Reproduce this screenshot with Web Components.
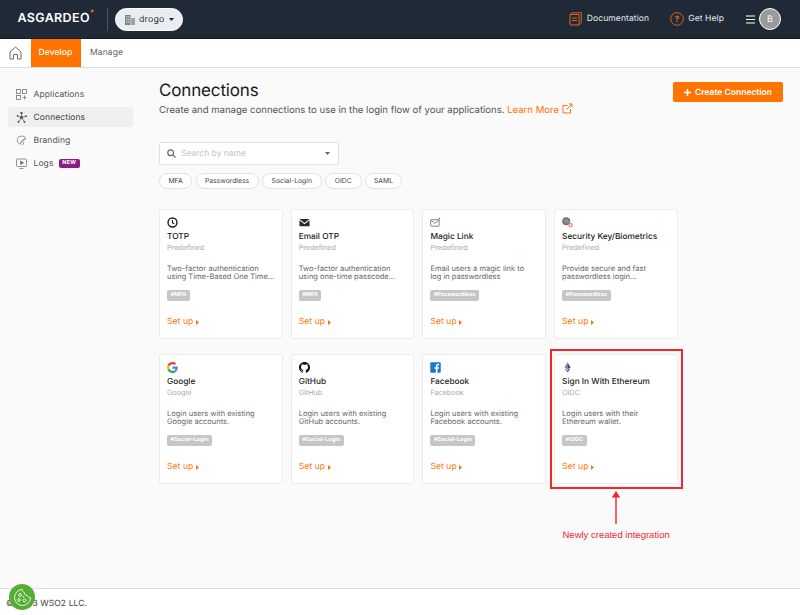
<!doctype html>
<html lang="en"><head><meta charset="utf-8"><title>Connections</title>
<style>
html,body{margin:0;padding:0;height:615px;overflow:hidden}
body{font-family:Inter,"Noto Sans",sans-serif;text-rendering:geometricPrecision;background:#fafafa;color:#333;display:flex;flex-direction:column;width:800px}
</style></head><body>
<app-header></app-header>
<app-tabs></app-tabs>
<main-area>
  <side-nav slot="nav"></side-nav>
  <page-head></page-head>
  <search-box></search-box>
  <filter-row></filter-row>
  <card-grid>
    <conn-card icon="clock" name="TOTP" kind="Predefined" l1="Two-factor authentication" l2="using Time-Based One Time..." tag="#MFA"></conn-card>
    <conn-card icon="mail" name="Email OTP" kind="Predefined" l1="Two-factor authentication" l2="using one-time passcode..." tag="#MFA"></conn-card>
    <conn-card icon="magic" name="Magic Link" kind="Predefined" l1="Email users a magic link to" l2="log in passwordless" tag="#Passwordless"></conn-card>
    <conn-card icon="finger" name="Security Key/Biometrics" kind="Predefined" l1="Provide secure and fast" l2="passwordless login..." tag="#Passwordless"></conn-card>
    <conn-card icon="google" name="Google" kind="Google" l1="Login users with existing" l2="Google accounts." tag="#Social-Login"></conn-card>
    <conn-card icon="github" name="GitHub" kind="GitHub" l1="Login users with existing" l2="GitHub accounts." tag="#Social-Login"></conn-card>
    <conn-card icon="facebook" name="Facebook" kind="Facebook" l1="Login users with existing" l2="Facebook accounts." tag="#Social-Login"></conn-card>
    <conn-card icon="eth" name="Sign In With Ethereum" kind="OIDC" l1="Login users with their" l2="Ethereum wallet." tag="#OIDC"></conn-card>
  </card-grid>
</main-area>
<page-footer></page-footer>
<red-note></red-note>
<script>
const FONT='font-family:Inter,"Noto Sans",sans-serif;';
function def(name,html,init){
  customElements.define(name,class extends HTMLElement{
    constructor(){super();const r=this.attachShadow({mode:'open'});r.innerHTML=typeof html==='function'?html(this):html;}
    connectedCallback(){if(init)init(this);}
  });
}
const ICONS={
 clock:`<svg width="11" height="11" viewBox="0 0 12 12"><circle cx="6" cy="6" r="4.900" fill="none" stroke="#1c1c1c" stroke-width="1.500"/><path d="M6 3.200V6.200L8 7.600" fill="none" stroke="#1c1c1c" stroke-width="1.200"/></svg>`,
 mail:`<svg width="11" height="11" viewBox="0 0 12 12"><path d="M.5 2.200h11L6 6.600z" fill="#2a2a2a"/><path d="M.5 3.600 6 8l5.500-4.400v6.600H.5z" fill="#2a2a2a"/></svg>`,
 magic:`<svg width="11" height="11" viewBox="0 0 12 12" fill="none" stroke="#555" stroke-width=".8"><rect x=".7" y="3" width="9.300" height="7" rx=".8"/><path d="M.9 3.400 5.300 7l4.500-3.600"/><path d="M10.200 .8v2M9.200 1.800h2" stroke="#777"/></svg>`,
 finger:`<svg width="11" height="11" viewBox="0 0 12 12"><circle cx="4.600" cy="4.600" r="4.300" fill="#6f7378"/><path d="M2.500 4.500a2.200 2.200 0 0 1 4.300 0v2M3.600 7V4.700a1 1 0 0 1 2 0v3" fill="none" stroke="#c9cbce" stroke-width=".5"/><rect x="7" y="6.600" width="4.600" height="4.600" rx="1.400" fill="#f58a7d"/><rect x="8.500" y="8" width="1.600" height="1.900" fill="#fff"/></svg>`,
 google:`<svg width="11" height="11" viewBox="0 0 48 48"><path fill="#EA4335" d="M24 9.500c3.500 0 6.700 1.200 9.200 3.600l6.900-6.900C35.900 2.400 30.500 0 24 0 14.600 0 6.500 5.400 2.600 13.200l8 6.200C12.400 13.700 17.700 9.500 24 9.500z"/><path fill="#4285F4" d="M47 24.500c0-1.600-.1-3.100-.4-4.500H24v9h12.900c-.6 3-2.200 5.500-4.700 7.200l7.700 6c4.500-4.200 7.100-10.300 7.100-17.700z"/><path fill="#FBBC05" d="M10.600 28.600A14.500 14.500 0 0 1 9.800 24c0-1.600.3-3.200.8-4.600l-8-6.200A24 24 0 0 0 0 24c0 3.900.9 7.500 2.600 10.800z"/><path fill="#34A853" d="M24 48c6.500 0 11.900-2.100 15.900-5.800l-7.700-6c-2.200 1.500-4.900 2.300-8.200 2.300-6.300 0-11.600-4.200-13.500-9.900l-8 6.200C6.500 42.600 14.600 48 24 48z"/></svg>`,
 github:`<svg width="11" height="11" viewBox="0 0 16 16"><path fill="#111" d="M8 0C3.580 0 0 3.580 0 8c0 3.540 2.290 6.530 5.470 7.590.4.070.55-.17.55-.38 0-.19-.01-.82-.01-1.490-2.010.37-2.530-.49-2.690-.94-.09-.23-.48-.94-.82-1.130-.28-.15-.68-.52-.01-.53.63-.01 1.080.58 1.230.82.720 1.210 1.870.87 2.330.66.070-.52.280-.87.510-1.070-1.780-.2-3.640-.89-3.640-3.950 0-.87.310-1.590.820-2.150-.08-.2-.36-1.020.08-2.120 0 0 .67-.21 2.200.82.640-.18 1.320-.27 2-.27s1.360.09 2 .27c1.530-1.040 2.200-.82 2.200-.82.440 1.100.160 1.920.080 2.120.510.560.820 1.270.820 2.150 0 3.070-1.870 3.750-3.650 3.950.290.250.540.730.540 1.480 0 1.070-.01 1.930-.01 2.200 0 .210.150.460.550.380A8 8 0 0 0 16 8c0-4.420-3.580-8-8-8z"/></svg>`,
 facebook:`<svg width="11" height="11" viewBox="0 0 12 12"><rect x=".3" y=".3" width="11.400" height="11.400" rx="1" fill="#1877d2"/><path fill="#fff" d="M8.200 12V7.400h1.500l.25-1.800H8.200V4.500c0-.5.150-.85.900-.85h.95V2.050C9.880 2.030 9.330 2 8.720 2 7.400 2 6.400 2.800 6.400 4.300v1.300H4.900v1.800h1.500V12z"/></svg>`,
 eth:`<svg width="11" height="11" viewBox="0 0 12 12"><path d="M6 .4 2.700 6 6 8z" fill="#7d83a8"/><path d="M6 .4 9.300 6 6 8z" fill="#3e4468"/><path d="M2.700 6.700 6 11.600V8.700z" fill="#7d83a8"/><path d="M9.300 6.700 6 11.600V8.700z" fill="#3e4468"/></svg>`
};
const caret=c=>`<svg width="5" height="3" viewBox="0 0 7 4"><path d="M0 0h7L3.500 4z" fill="${c}"/></svg>`;

def('app-header',`<style>
:host{display:flex;height:38px;border-bottom:1px solid #161c24;background:#202a36;align-items:center;color:#fff;${FONT}box-sizing:content-box}
.logo{margin-left:17.500px;font:600 12.500px/1 Inter,sans-serif;letter-spacing:.35px;position:relative;width:77px;white-space:nowrap;color:#fff}
.logo i{position:absolute;left:73px;top:-4px;color:#f47b20;font:700 8px/1 "Liberation Sans",sans-serif}
.div{width:1px;height:23px;background:#4a535e;margin-left:12.500px}
.org{margin-left:7px;width:68px;height:23px;box-sizing:border-box;border-radius:12px;background:#e9edf1;border:1px solid #fff;display:flex;align-items:center;color:#333;font-size:8.800px;font-weight:400;padding-left:8.500px}
.org svg:first-child{margin-right:4.500px}.org span{letter-spacing:.2px;width:30px}
.sp{flex:1}
.act{display:flex;align-items:center;font-size:8.500px;color:#e8eaec;letter-spacing:.1px}
.a1 svg{margin-right:5px}.a2{margin-left:21px}.a2 svg{margin-right:4px}
.menu{margin-left:22px;display:block}
.av{margin:0 19px 0 4px;width:22px;height:22px;box-sizing:border-box;border-radius:50%;background:#9a9a9a;border:1.500px solid #fff;display:flex;align-items:center;justify-content:center;font-size:9px;color:#fff}
</style>
<div class="logo">ASGARDEO<i>*</i></div><div class="div"></div>
<div class="org"><svg width="10" height="11" viewBox="0 0 10 11" fill="#7c8288"><path d="M0 1h5.500v10H0z"/><path d="M6.200 4H10v7H6.200z" fill="#9aa0a5"/><path d="M1.200 2.500h1.200v1.200H1.200zM3.200 2.500h1.200v1.200H3.200zM1.200 5h1.200v1.200H1.200zM3.200 5h1.200v1.200H3.200zM1.200 7.500h1.200v1.200H1.200zM3.200 7.500h1.200v1.200H3.200z" fill="#e9edf1"/></svg><span>drogo</span>${caret('#222')}</div>
<div class="sp"></div>
<div class="act a1"><svg width="13" height="14" viewBox="0 0 13 14" fill="none" stroke="#d9641e" stroke-width="1"><path d="M1 2.500h9v10.500H2a1 1 0 0 1-1-1z"/><path d="M1 2.500 3 .8h9.300v10L10 13M3 6h5M3 8.500h5"/></svg>Documentation</div>
<div class="act a2"><svg width="14" height="14" viewBox="0 0 14 14"><circle cx="7" cy="7" r="6.300" fill="none" stroke="#d9641e" stroke-width="1"/><text x="7" y="10" text-anchor="middle" font-size="8.500" font-weight="700" fill="#e0661c" font-family="Inter,sans-serif">?</text></svg>Get Help</div>
<svg class="menu" width="9" height="9" viewBox="0 0 9 9"><path d="M0 1h9M0 4.500h9M0 8h9" stroke="#fff" stroke-width="1.200"/></svg>
<div class="av">B</div>`);

def('app-tabs',`<style>
:host{display:flex;height:28px;background:#fff;border-bottom:1px solid #dcdcdc;align-items:stretch;font-size:8.500px;${FONT}letter-spacing:.1px}
.home{width:30.500px;display:flex;align-items:center;justify-content:center}
.dev{width:50px;background:#ff7300;color:#fff;display:flex;align-items:center;justify-content:center;font-weight:500}
.man{margin-left:9.500px;display:flex;align-items:center;color:#666}
</style>
<div class="home"><svg width="13" height="14" viewBox="0 0 13 14" fill="none" stroke="#6d6d6d" stroke-width="1"><path d="M1 6 6.500 1 12 6v7H8.500V8.500h-4V13H1z"/></svg></div>
<div class="dev">Develop</div><div class="man">Manage</div>`);

def('main-area',`<style>
:host{display:flex;flex:1;min-height:0;position:relative}
.side{width:159px;flex:none}
.c{flex:1;display:flex;flex-direction:column;padding-right:17px}
</style>
<div class="side"><slot name="nav"></slot></div><div class="c"><slot></slot></div>`);

def('side-nav',`<style>
:host{display:flex;flex-direction:column;gap:3px;padding:16px 0 0 8px;width:125px;font-size:8.500px;${FONT}color:#555;letter-spacing:.1px}
.i{height:20px;display:flex;align-items:center;padding:1px 0 0 8px;border-radius:2px;box-sizing:border-box}
.i svg{width:11px;height:11px;margin:-1px 6.500px 0 0;flex:none}
.on{background:#efefef;color:#444}
.new{margin-left:5.500px;background:#8c1a87;color:#fff;font-size:5.500px;font-weight:700;width:20.500px;text-align:center;height:9.500px;line-height:9.500px;border-radius:2px;letter-spacing:.2px}
</style>
<div class="i"><svg viewBox="0 0 11 11" fill="none" stroke="#777" stroke-width=".8"><rect x=".5" y=".5" width="4" height="4"/><rect x="6.500" y=".5" width="4" height="4"/><rect x=".5" y="6.500" width="4" height="4"/><path d="M8.500 6.500v4M6.500 8.500h4"/></svg>Applications</div>
<div class="i on"><svg viewBox="0 0 11 11" fill="none" stroke="#555" stroke-width=".7"><path d="M5.500 1v4.500M5.500 5.500 1.500 3.800M5.500 5.500 10 4.200M5.500 5.500 2.500 10M5.500 5.500 8.500 10"/><circle cx="5.500" cy="1" r=".9" fill="#555"/><circle cx="5.500" cy="5.500" r="1.200" fill="#555"/><circle cx="1.500" cy="3.800" r=".6" fill="#555"/><circle cx="10" cy="4.200" r=".6" fill="#555"/><circle cx="2.500" cy="10" r=".7" fill="#555"/><circle cx="8.500" cy="10" r=".7" fill="#555"/></svg>Connections</div>
<div class="i"><svg viewBox="0 0 11 11" fill="none" stroke="#777" stroke-width=".8"><path d="M2 2.500C4 .5 8 .8 9.500 2.500L5 7.500 4.500 9C2 9.500.5 5 2 2.500z"/><path d="M4.500 7 10 3.500M7 7c1 1 .5 2.500-1 3"/></svg>Branding</div>
<div class="i"><svg viewBox="0 0 11 11" fill="none" stroke="#777" stroke-width=".8"><rect x=".5" y="1" width="10" height="7.500" rx=".8"/><path d="M3.500 10.500h4"/><path d="M4.500 3 7.500 4.800 4.500 6.500z" fill="#777"/></svg>Logs<span class="new">NEW</span></div>`,
);

def('page-head',`<style>
:host{display:flex;align-items:flex-start;${FONT}padding-top:11px}
.l{flex:1}
h1{margin:0;font-size:17px;font-weight:400;color:#1c1c1c;line-height:24px;letter-spacing:-.15px}
p{margin:0;font-size:9.550px;color:#555;line-height:14px;letter-spacing:0;white-space:nowrap}
a{color:#ff7300;text-decoration:none}
svg{vertical-align:-1.500px}
button{all:unset;box-sizing:border-box;width:110px;height:20px;margin-top:3px;background:#ff7300;border-radius:2px;color:#fff;font-size:8.500px;font-weight:600;display:flex;align-items:center;justify-content:center;gap:4px;letter-spacing:0;padding-top:1px}
</style>
<div class="l"><h1>Connections</h1><p>Create and manage connections to use in the login flow of your applications. <a>Learn More <svg width="11" height="11" viewBox="0 0 11 11" fill="none" stroke="#ff7300" stroke-width="1"><path d="M8.500 6v4H1V2.500h4.500"/><path d="M4.500 6.500 10 1M7 1h3v3"/></svg></a></p></div>
<button><svg width="7" height="7" viewBox="0 0 7 7"><path d="M3.500 0v7M0 3.500h7" stroke="#fff" stroke-width="1.500"/></svg>Create Connection</button>`);

def('search-box',`<style>
:host{display:block;width:180px;height:23px;box-sizing:border-box;background:#fff;border:1px solid #e0e0e0;border-radius:2px;margin-top:24px;${FONT}font-size:8.500px;color:#c4c4c4;letter-spacing:0}
.w{display:flex;align-items:center;height:100%;padding:0 8px 0 7px}
.t{flex:1;margin:1px 0 0 5px}
</style><div class="w"><svg width="9" height="9" viewBox="0 0 9 9" fill="none" stroke="#666" stroke-width="1.200"><circle cx="3.700" cy="3.700" r="2.900"/><path d="m5.800 5.800 2.700 2.700"/></svg><span class="t">Search by name</span>${caret('#666')}</div>`);

def('filter-chip',`<style>
:host{display:flex;align-items:center;justify-content:center;height:16px;box-sizing:border-box;background:#fff;border:1px solid #e2e2e2;border-radius:8px;${FONT}font-size:6.800px;color:#444;letter-spacing:0}
</style><slot></slot>`);
def('filter-row',`<style>
:host{display:flex;gap:3.500px;margin-top:8px}
</style><filter-chip style="width:33px">MFA</filter-chip><filter-chip style="width:63px">Passwordless</filter-chip><filter-chip style="width:59.500px">Social-Login</filter-chip><filter-chip style="width:36.500px">OIDC</filter-chip><filter-chip style="width:37px">SAML</filter-chip>`);

def('card-grid',`<style>
:host{display:grid;grid-template-columns:repeat(4,123.500px);column-gap:8.200px;row-gap:15px;margin-top:20px}
</style><slot></slot>`);

def('conn-card',el=>{
 const a=n=>el.getAttribute(n);
 return `<style>
 :host{display:block;height:130px;box-sizing:border-box;background:#fff;border:1px solid #ececec;border-radius:2px;padding:7.500px 0 0 7px;${FONT}}
 .ic{height:11px;display:block}.ic svg{display:block}
 .n{margin-top:3.500px;font-size:8.300px;font-weight:500;color:#222;line-height:11px;letter-spacing:0;white-space:nowrap}
 .k{font-size:7.200px;color:#aaa;line-height:10px;margin-top:0;letter-spacing:0}
 .d{margin-top:12px;font-size:7.500px;line-height:8.700px;color:#666;letter-spacing:0;white-space:nowrap}
 .t{display:inline-block;margin-top:8px;background:#c6c6c6;color:#fff;font-size:5.600px;font-weight:700;line-height:11px;height:11px;padding:0 3.500px;border-radius:2px;letter-spacing:0;vertical-align:top}
 .s{margin-top:15.500px;font-size:8.500px;color:#ff7300;display:flex;align-items:center;gap:2.500px;letter-spacing:.1px;line-height:11px}
 </style>
 <div class="ic">${ICONS[a('icon')]}</div>
 <div class="n">${a('name')}</div><div class="k">${a('kind')}</div>
 <div class="d">${a('l1')}<br>${a('l2')}</div>
 <div><span class="t">${a('tag')}</span></div>
 <div class="s">Set up <svg width="3" height="5" viewBox="0 0 3 5"><path d="M0 0l3 2.500L0 5z" fill="#ff7300"/></svg></div>`;
});

def('page-footer',`<style>
:host{display:flex;height:27px;box-sizing:border-box;background:#fff;border-top:1px solid #dedede;align-items:center;padding:3px 0 0 6px;${FONT}font-size:8.500px;color:#444;letter-spacing:.1px;position:relative}
.ck{position:absolute;left:9px;top:-5px;width:26px;height:26px;border-radius:50%;background:#55ad33;display:flex;align-items:center;justify-content:center}
</style>© 2023 WSO2 LLC.<div class="ck"><svg width="19" height="19" viewBox="0 0 19 19" fill="none" stroke="#e9f5e3" stroke-width="1"><path d="M9.500 1.500a8 8 0 1 0 8 8c-1.500.4-3-.5-3.200-2-1.500.2-3-1-2.800-2.800-1.500-.2-2.300-1.700-2-3.200z"/><circle cx="7" cy="7" r="1.400"/><circle cx="6" cy="12" r="1.400"/><circle cx="11.500" cy="12.500" r="1.400"/><circle cx="10.500" cy="8.800" r=".5"/></svg></div>`);

def('red-note',`<style>
:host{display:block;position:absolute;left:550px;top:348.500px;width:132.500px;height:140.500px;box-sizing:border-box;border:2px solid #f0282c;pointer-events:none}
svg{position:absolute;left:58px;top:140.500px}
span{position:absolute;left:10.500px;top:178px;white-space:nowrap;font:9.500px/14px "Liberation Sans",Arial,sans-serif;color:#ee2a2e}
</style><svg width="12" height="36" viewBox="0 0 12 36"><path d="M6 0 1.800 6.500h3.500V33h1.400V6.500h3.500z" fill="#f0282c"/></svg><span>Newly created integration</span>`);
</script>
</body></html>
